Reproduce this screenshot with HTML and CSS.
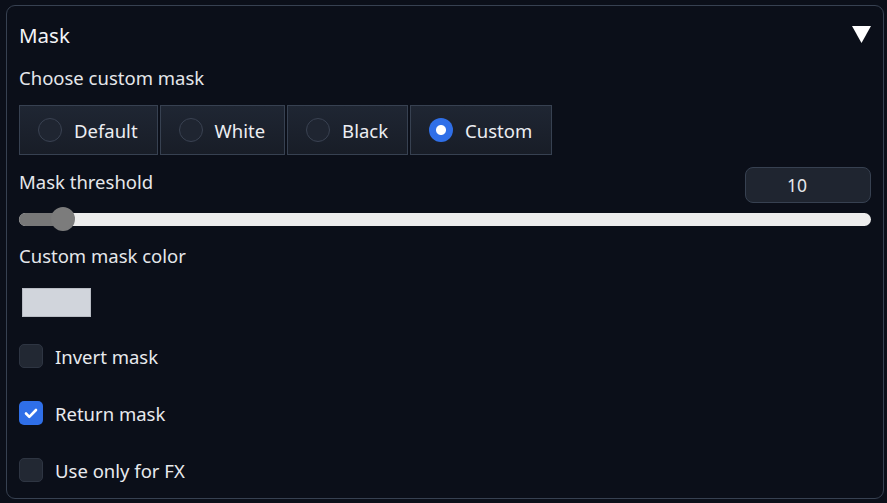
FILE: index.html
```html
<!DOCTYPE html>
<html>
<head>
<meta charset="utf-8">
<link rel="stylesheet" href="styles.css">
</head>
<body>
<div class="panel">
  <div class="header">
    <span class="title">Mask</span>
    <svg class="caret" width="19" height="17" viewBox="0 0 19 17"><polygon points="0,0 19,0 9.5,17" fill="#ffffff"/></svg>
  </div>
  <div class="label first">Choose custom mask</div>
  <div class="radios">
    <label class="radio"><span class="dot"></span><span>Default</span></label>
    <label class="radio"><span class="dot"></span><span>White</span></label>
    <label class="radio"><span class="dot"></span><span>Black</span></label>
    <label class="radio"><span class="dot on"></span><span>Custom</span></label>
  </div>
  <div class="slider-head">
    <span class="label">Mask threshold</span>
    <div class="num">10</div>
  </div>
  <div class="slider">
    <div class="track"><div class="fill" style="width:44px"></div></div>
    <div class="thumb" style="left:32px"></div>
  </div>
  <div class="label color-label">Custom mask color</div>
  <div class="swatch"></div>
  <div class="checks">
    <div class="check"><span class="box"></span><span>Invert mask</span></div>
    <div class="check"><span class="box on"><svg viewBox="0 0 24 24" width="24" height="24"><path d="M7 12.5l3.3 3.3L17 9" fill="none" stroke="#fff" stroke-width="2.6" stroke-linecap="round" stroke-linejoin="round"/></svg></span><span>Return mask</span></div>
    <div class="check"><span class="box"></span><span>Use only for FX</span></div>
  </div>
</div>
</body>
</html>
```
FILE: styles.css
```css
html, body {
  margin: 0;
  padding: 0;
  background: #0b0f19;
}
body {
  font-family: "Noto Sans", "Open Sans", sans-serif;
  color: #e8eaee;
  width: 887px;
  height: 503px;
  overflow: hidden;
}
.panel {
  box-sizing: border-box;
  margin: 5px 3px 0 6px;
  width: 878px;
  height: 494px;
  border: 1px solid #374151;
  border-radius: 9px;
  padding: 15px 12px 0 12px;
}
.header {
  display: flex;
  justify-content: space-between;
  align-items: center;
  height: 28px;
}
.title {
  font-size: 20.5px;
  color: #f3f4f6;
}
.caret {
  display: block;
  margin-right: 0;
  margin-top: -1px;
}
.label {
  font-size: 18.5px;
  line-height: 26px;
  height: 26px;
  color: #e5e7eb;
}
.label.first {
  margin-top: 16px;
}
.radios {
  display: flex;
  gap: 2px;
  margin-top: 14px;
}
.radio {
  box-sizing: border-box;
  height: 50px;
  display: flex;
  align-items: center;
  gap: 12px;
  padding: 0 19px 0 18px;
  border: 1px solid #374151;
  background: linear-gradient(#1f2633, #181d27);
  font-size: 18.5px;
  color: #eceef2;
}
.dot {
  box-sizing: border-box;
  width: 24px;
  height: 24px;
  border-radius: 50%;
  border: 1px solid #3a4252;
  background: #1f2531;
}
.dot.on {
  border: none;
  background: radial-gradient(circle, #ffffff 0 4.5px, #2f6fe8 5.5px);
}
.slider-head {
  display: flex;
  justify-content: space-between;
  align-items: flex-start;
  margin-top: 12px;
  height: 36px;
}
.slider-head .label {
  margin-top: 2px;
}
.num {
  box-sizing: border-box;
  width: 126px;
  height: 36px;
  border: 1px solid #374151;
  border-radius: 8px;
  background: #1f2530;
  display: flex;
  align-items: center;
  justify-content: center;
  padding-right: 22px;
  font-size: 17.5px;
  color: #e5e7eb;
}
.slider {
  position: relative;
  margin-top: 4px;
  height: 24px;
}
.track {
  position: absolute;
  left: 0;
  right: 0;
  top: 6px;
  height: 13px;
  border-radius: 7px;
  background: #ededed;
  overflow: hidden;
}
.fill {
  height: 100%;
  background: #787878;
}
.thumb {
  position: absolute;
  top: 0;
  width: 24px;
  height: 24px;
  border-radius: 50%;
  background: #7c7c7c;
}
.color-label {
  margin-top: 12px;
}
.swatch {
  margin-top: 19px;
  margin-left: 3px;
  width: 69px;
  height: 29px;
  background: #d1d5dc;
  box-sizing: border-box;
  border: 1px solid #b8bcc4;
}
.checks {
  display: flex;
  flex-direction: column;
  gap: 33px;
  margin-top: 27px;
}
.check {
  display: flex;
  align-items: center;
  gap: 12px;
  height: 24px;
  font-size: 18.5px;
  color: #e8eaee;
}
.box {
  box-sizing: border-box;
  width: 24px;
  height: 24px;
  border-radius: 5px;
  border: 1px solid #2e3542;
  background: #222833;
  display: flex;
}
.box.on {
  border: none;
  background: #2f6fe8;
}
```
